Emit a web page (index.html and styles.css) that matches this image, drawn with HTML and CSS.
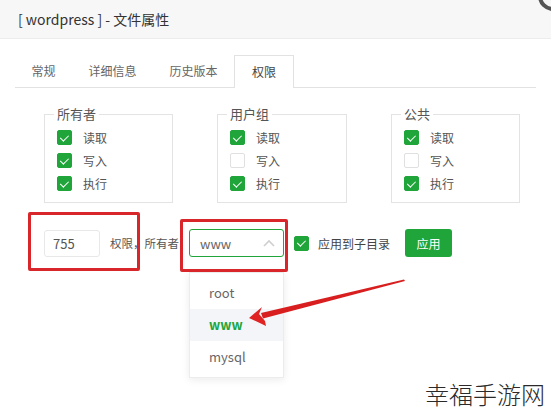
FILE: index.html
```html
<!DOCTYPE html>
<html lang="zh">
<head>
<meta charset="utf-8">
<title>文件属性</title>
<link rel="stylesheet" href="styles.css">
</head>
<body>
<div class="page">
  <div class="header">[ wordpress ] - 文件属性</div>
  <span class="close-ring"></span>

  <div class="tabs">
    <div class="tab">常规</div>
    <div class="tab">详细信息</div>
    <div class="tab">历史版本</div>
    <div class="tab active">权限</div>
  </div>

  <div class="groups">
    <fieldset class="group">
      <legend>所有者</legend>
      <div class="row"><span class="cb on"></span><span class="lbl">读取</span></div>
      <div class="row"><span class="cb on"></span><span class="lbl">写入</span></div>
      <div class="row"><span class="cb on"></span><span class="lbl">执行</span></div>
    </fieldset>
    <fieldset class="group">
      <legend>用户组</legend>
      <div class="row"><span class="cb on"></span><span class="lbl">读取</span></div>
      <div class="row"><span class="cb"></span><span class="lbl">写入</span></div>
      <div class="row"><span class="cb on"></span><span class="lbl">执行</span></div>
    </fieldset>
    <fieldset class="group">
      <legend>公共</legend>
      <div class="row"><span class="cb on"></span><span class="lbl">读取</span></div>
      <div class="row"><span class="cb"></span><span class="lbl">写入</span></div>
      <div class="row"><span class="cb on"></span><span class="lbl">执行</span></div>
    </fieldset>
  </div>

  <div class="controls">
    <div class="num">755</div>
    <span class="txt">权限，所有者</span>
    <div class="select">
      <span class="sel-val">www</span>
      <svg class="chev" width="12" height="8" viewBox="0 0 12 8"><path d="M1 7 L6 2 L11 7" fill="none" stroke="#cfcfcf" stroke-width="1.6"/></svg>
      <ul class="menu">
        <li>root</li>
        <li class="cur">www</li>
        <li>mysql</li>
      </ul>
    </div>
    <span class="cb on sub"></span>
    <span class="txt sub-lbl">应用到子目录</span>
    <button class="btn">应用</button>
  </div>

  <span class="mark mark1"></span>
  <span class="mark mark2"></span>

  <svg class="arrow" width="551" height="415" viewBox="0 0 551 415">
    <polygon points="404,279.5 405,281 263,318.5 261,313" fill="#d81e1e"/>
    <polygon points="249,318 262,307 259,314 265,321 266,326" fill="#e02424"/>
  </svg>

  <div class="watermark">幸福手游网</div>
</div>
</body>
</html>
```

FILE: styles.css
```css
html, body {
  margin: 0;
  padding: 0;
  background: #fff;
}
body {
  font-family: "Noto Sans CJK SC", "Noto Sans", sans-serif;
  color: #555;
}
.page {
  position: relative;
  width: 551px;
  height: 415px;
  overflow: hidden;
}
.header {
  height: 38px;
  line-height: 38px;
  padding-left: 18px;
  background: #f7f7f7;
  border-bottom: 1px solid #ececec;
  font-size: 14px;
  color: #333;
}
.close-ring {
  position: absolute;
  left: 538px;
  top: -19px;
  width: 22px;
  height: 22px;
  border: 4px solid #555;
  border-radius: 50%;
}
.tabs {
  display: flex;
  margin: 16px 0 0 15px;
  width: 521px;
  height: 33px;
  border-bottom: 1px solid #e2e2e2;
  box-sizing: border-box;
}
.tab {
  padding: 0 16.5px;
  line-height: 32px;
  font-size: 12px;
  color: #666;
}
.tab.active {
  padding: 0 17px;
  background: #fff;
  border: 1px solid #e2e2e2;
  border-bottom: none;
  height: 33px;
  box-sizing: border-box;
  color: #444;
}
.groups {
  display: grid;
  grid-template-columns: 129px 130px 129px;
  column-gap: 44px;
  padding-left: 44px;
  margin-top: 18px;
}
.group {
  margin: 0;
  padding: 4px 12px 7px 12px;
  border: 1px solid #e3e3e3;
  min-width: 0;
  box-sizing: border-box;
}
.group legend {
  padding: 0 3px;
  margin-left: -3px;
  font-size: 13px;
  line-height: 16px;
  color: #555;
}
.row {
  display: flex;
  align-items: center;
  height: 23px;
}
.cb {
  display: inline-block;
  width: 15px;
  height: 15px;
  box-sizing: border-box;
  border: 1px solid #e0e0e0;
  border-radius: 2px;
  background: #fff;
  position: relative;
  flex: none;
}
.cb.on {
  background: #20a53a;
  border-color: #20a53a;
}
.cb.on::after {
  content: "";
  position: absolute;
  left: 4px;
  top: 1.5px;
  width: 3.5px;
  height: 7px;
  border: solid #fff;
  border-width: 0 1.5px 1.5px 0;
  transform: rotate(45deg);
}
.lbl {
  margin-left: 11px;
  font-size: 12px;
  color: #555;
}
.controls {
  display: flex;
  align-items: center;
  margin-top: 26px;
  padding-left: 44px;
  height: 28px;
}
.num {
  width: 56px;
  height: 27px;
  box-sizing: border-box;
  border: 1px solid #e8e8e8;
  border-radius: 3px;
  padding-left: 8px;
  line-height: 25px;
  font-size: 13px;
  color: #555;
}
.txt {
  font-size: 12px;
  color: #555;
}
.controls .txt {
  margin-left: 10px;
  font-size: 11.5px;
}
.select {
  position: relative;
  margin-left: 10px;
  width: 95px;
  height: 28px;
  box-sizing: border-box;
  border: 1px solid #20a53a;
  border-radius: 3px;
  display: flex;
  align-items: center;
  padding-left: 10px;
}
.sel-val {
  font-size: 13px;
  color: #666;
  flex: 1;
}
.chev {
  margin-right: 8px;
}
.menu {
  position: absolute;
  left: -1px;
  top: 42px;
  width: 95px;
  margin: 0;
  padding: 4px 0;
  list-style: none;
  background: #fff;
  border: 1px solid #ececec;
  box-shadow: 0 2px 8px rgba(0, 0, 0, 0.08);
  box-sizing: border-box;
}
.menu li {
  height: 32px;
  line-height: 32px;
  padding-left: 19px;
  font-size: 13px;
  color: #666;
}
.menu li.cur {
  background: #f3f5f8;
  color: #20a53a;
  font-weight: bold;
}
.cb.sub {
  margin-left: 10px;
}
.controls .sub-lbl {
  margin-left: 9px;
  font-size: 12px;
  color: #444;
}
.btn {
  margin-left: 15px;
  width: 47px;
  height: 28px;
  border: none;
  border-radius: 3px;
  background: #20a53a;
  color: #fff;
  font-family: inherit;
  font-size: 12px;
  padding: 0;
}
.mark {
  position: absolute;
  border: 3px solid #d8262a;
  border-radius: 2px;
  box-sizing: border-box;
}
.mark1 {
  left: 28px;
  top: 212px;
  width: 112px;
  height: 59px;
}
.mark2 {
  left: 180px;
  top: 219px;
  width: 108px;
  height: 53px;
}
.arrow {
  position: absolute;
  left: 0;
  top: 0;
  pointer-events: none;
}
.watermark {
  position: absolute;
  left: 425px;
  top: 378px;
  font-size: 24px;
  line-height: 32px;
  color: #2a2a2a;
  font-weight: 300;
  text-shadow: 0 0 6px #fff;
}
```
